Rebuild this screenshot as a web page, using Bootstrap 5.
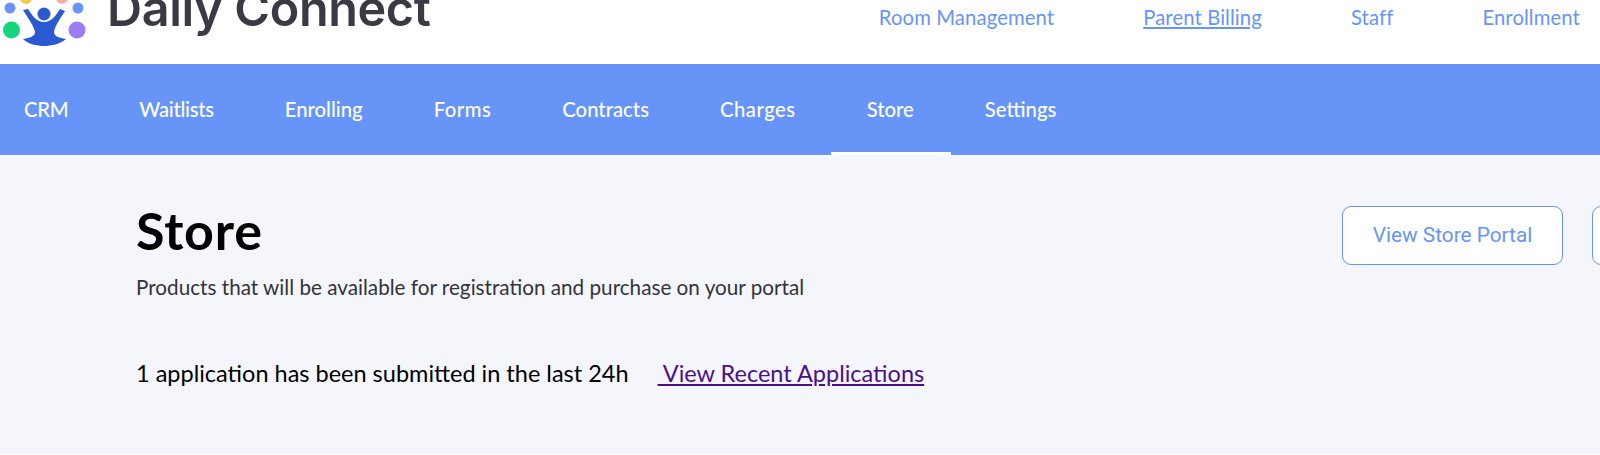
<!DOCTYPE html>
<html lang="en">
<head>
  <meta charset="UTF-8" />
  <title>Daily Connect - Store</title>
  <meta name="viewport" content="width=device-width, initial-scale=1">
  <link href="https://cdn.jsdelivr.net/npm/bootstrap@5.3.3/dist/css/bootstrap.min.css" rel="stylesheet">
  <style>
    html, body { height: 455px; overflow: hidden; background: #fff; }
    body { font-family: Lato, "Liberation Sans", sans-serif; }
    .top-bar { height: 64px; overflow: hidden; }
    .logo-mark { flex: none; }
    .logo-text { font-family: Inter, "Liberation Sans", sans-serif; font-weight: 600; font-size: 48.5px; line-height: 56px; color: #3a3a44; margin-top: -19px; margin-left: 17px; letter-spacing: -0.35px; }
    .top-links { gap: 89px; padding-right: 20px; margin-top: -30px; }
    .top-links a { color: #6794f7; font-size: 20.3px; letter-spacing: 0.1px; text-decoration: none; }
    .top-links a.is-hover { text-decoration: underline; }
    .tab-bar { background: #6794f7; height: 91px; padding-left: 24px; gap: 71px; }
    .tab-bar .nav-link { color: #fff; font-size: 20.3px; padding: 0; height: 91px; line-height: 91px; position: relative; font-weight: 500; }
    .tab-bar .nav-link.tab-tight { letter-spacing: -0.3px; }
    .tab-bar .nav-link.tab-wide { letter-spacing: 0.5px; }
    .tab-bar .nav-link.active::after { content: ""; position: absolute; left: -36px; right: -37px; bottom: 0; height: 3px; background: #fff; }
    .page-body { background: #f4f6fb; height: 299px; padding: 46px 0 0 136px; overflow: hidden; }
    .page-title { font-size: 52px; font-weight: 700; letter-spacing: 0.8px; color: #000; line-height: 58px; margin: 0; }
    .page-sub { font-size: 20.7px; color: #33333b; margin: 15px 0 0; line-height: 26px; }
    .portal-btn { font-family: Roboto, sans-serif; font-size: 20.8px; color: #6794f7; background: #fff; border: 1.5px solid #6794f7; border-radius: 9px; height: 59px; width: 221px; padding: 0; flex: none; }
    .portal-btn.next-btn { margin-left: 29px; }
    .head-btns { margin-top: 5px; margin-right: -213px; }
    .recent-line { font-size: 23.5px; color: #000; margin-top: 59px; line-height: 28px; }
    .recent-line a { color: #4b0f8c; margin-left: 29px; white-space: pre; }
  </style>
</head>
<body>
  <header class="top-bar d-flex justify-content-between align-items-center bg-white">
    <div class="d-flex align-items-start">
      <svg class="logo-mark" width="90" height="64" viewBox="0 0 90 64">
        <circle cx="26" cy="-2" r="6" fill="#f7c948"/>
        <circle cx="62" cy="-2" r="6" fill="#fbb0ab"/>
        <circle cx="10" cy="8" r="5.5" fill="#6794f7"/>
        <circle cx="78" cy="8" r="5.5" fill="#6794f7"/>
        <circle cx="11.5" cy="30" r="8.5" fill="#16d67c"/>
        <circle cx="77" cy="30" r="8.5" fill="#9b7cf5"/>
        <circle cx="44" cy="14" r="6.5" fill="#2b59d1"/>
        <path d="M23 10 L28 9 C32 15 36 22 44 22 C52 22 56 15 60 9 L65 11 C60 19 55 26 54 32 C54 36 59 38 66 39 C60 44 51 46 44 46 C37 46 28 44 23 39 C30 38 35 36 35 32 C34 26 28 18 23 10 Z" fill="#2b59d1"/>
      </svg>
      <div class="logo-text">Daily Connect</div>
    </div>
    <nav class="top-links d-flex">
      <a href="#">Room Management</a>
      <a href="#" class="is-hover">Parent Billing</a>
      <a href="#">Staff</a>
      <a href="#">Enrollment</a>
    </nav>
  </header>

  <ul class="nav tab-bar">
    <li class="nav-item"><a class="nav-link tab-tight" href="#">CRM</a></li>
    <li class="nav-item"><a class="nav-link tab-tight" href="#">Waitlists</a></li>
    <li class="nav-item"><a class="nav-link" href="#">Enrolling</a></li>
    <li class="nav-item"><a class="nav-link tab-wide" href="#">Forms</a></li>
    <li class="nav-item"><a class="nav-link" href="#">Contracts</a></li>
    <li class="nav-item"><a class="nav-link tab-wide" href="#">Charges</a></li>
    <li class="nav-item"><a class="nav-link active" href="#">Store</a></li>
    <li class="nav-item"><a class="nav-link" href="#">Settings</a></li>
  </ul>

  <main class="page-body">
    <div class="d-flex justify-content-between align-items-start">
      <div>
        <h1 class="page-title">Store</h1>
        <p class="page-sub">Products that will be available for registration and purchase on your portal</p>
      </div>
      <div class="head-btns d-flex">
        <button type="button" class="btn portal-btn">View Store Portal</button>
        <button type="button" class="btn portal-btn next-btn"></button>
      </div>
    </div>
    <div class="recent-line">1 application has been submitted in the last 24h<a href="#"> View Recent Applications</a></div>
  </main>
</body>
</html>
